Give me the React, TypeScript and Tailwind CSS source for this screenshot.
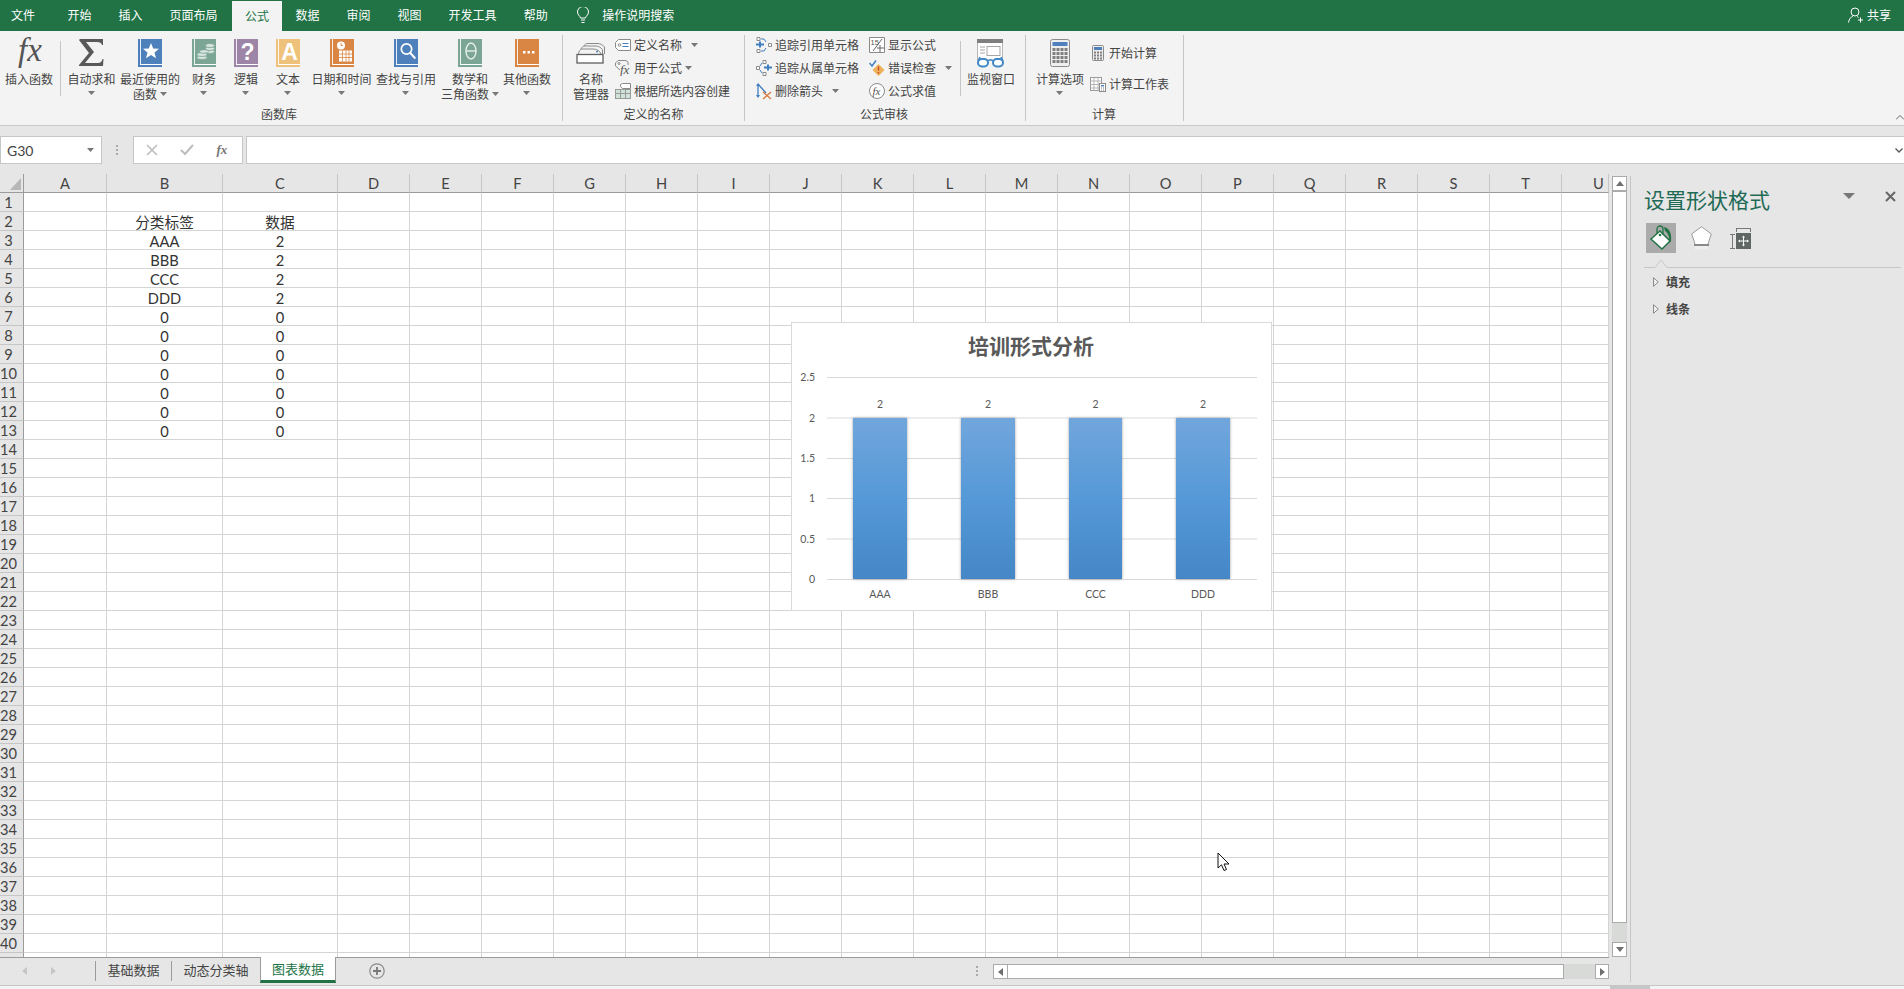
import React from 'react';

const cjk = "font-['Noto_Sans_CJK_SC',sans-serif]";

const Caret = ({ className = '' }: { className?: string }) => (
  <svg width="7" height="4" viewBox="0 0 7 4" className={className}>
    <path d="M0 0h7L3.5 4z" fill="#777" />
  </svg>
);

// book icons in the function library
const Book = ({ color, children }: { color: string; children?: React.ReactNode }) => (
  <svg width="24" height="28" viewBox="0 0 24 28">
    <rect width="24" height="28" fill={color} />
    <rect x="2" y="0" width="1" height="25" fill="#fff" opacity="0.85" />
    <rect x="2" y="25" width="22" height="1" fill="#fff" />
    {children}
  </svg>
);

const icons = {
  fx: (
    <svg width="36" height="40" viewBox="0 -6 36 40" className="-mb-[12px] -mt-[6px]">
      <text x="7" y="22" fontFamily="Liberation Serif" fontStyle="italic" fontSize="33" fill="#555">fx</text>
    </svg>
  ),
  sigma: (
    <svg width="25" height="28" viewBox="0 0 25 28">
      <path d="M1 0H24V6H23C22.5 4 21 3 18 3H7L15 13L6 24H19C22 24 23 22 23.5 20H24.5L24 27H0V26L10 14L0 1Z" fill="#595959" />
    </svg>
  ),
  recent: (
    <Book color="#4e81bb">
      <path d="M13 4l2.2 5.4 5.8.4-4.5 3.7 1.5 5.7L13 16l-5 3.2 1.5-5.7L5 9.800l5.800-.4z" fill="#fff" />
    </Book>
  ),
  finance: (
    <Book color="#7ba595">
      <g fill="#d8e4df" stroke="#7ba595" strokeWidth="0.8">
        <ellipse cx="18" cy="12.500" rx="4.500" ry="2" />
        <ellipse cx="18" cy="9.500" rx="4.500" ry="2" />
        <ellipse cx="18" cy="6.500" rx="4.500" ry="2" />
        <ellipse cx="10" cy="18.500" rx="5" ry="2" />
        <ellipse cx="10" cy="15.500" rx="5" ry="2" />
        <ellipse cx="12" cy="12.500" rx="4.500" ry="1.800" />
      </g>
    </Book>
  ),
  logic: (
    <Book color="#9c85a6">
      <text x="13.500" y="21" textAnchor="middle" fontFamily="Liberation Sans" fontWeight="700" fontSize="23" fill="#fff">?</text>
    </Book>
  ),
  text: (
    <Book color="#efc27b">
      <text x="13.500" y="21" textAnchor="middle" fontFamily="Liberation Sans" fontWeight="700" fontSize="23" fill="#fff">A</text>
    </Book>
  ),
  date: (
    <Book color="#d98644">
      <circle cx="11" cy="6.500" r="4" fill="#fff" />
      <path d="M11 4v2.500h2" stroke="#d98644" strokeWidth="0.900" fill="none" />
      <path d="M9 11.500h13v11H9z" fill="#fff" />
      <path d="M9 15h13M9 18.500h13M12.500 11.500v11M16 11.500v11M19 11.500v11" stroke="#d98644" strokeWidth="0.800" />
    </Book>
  ),
  lookup: (
    <Book color="#4e81bb">
      <circle cx="12.500" cy="10" r="5.200" fill="none" stroke="#fff" strokeWidth="1.700" />
      <path d="M16.300 14l5 5.500" stroke="#fff" strokeWidth="2" />
    </Book>
  ),
  math: (
    <Book color="#7ba595">
      <ellipse cx="13" cy="12" rx="5" ry="8" fill="none" stroke="#e6efeb" strokeWidth="1.400" />
      <path d="M8 12h10" stroke="#e6efeb" strokeWidth="1.400" />
    </Book>
  ),
  other: (
    <Book color="#d98644">
      <path d="M8 12h2.500v2.500H8zM12.500 12H15v2.500h-2.500zM17 12h2.500v2.500H17z" fill="#fff" />
    </Book>
  ),
  names: (
    <svg width="30" height="21" viewBox="0 0 30 21">
      <g fill="none" stroke="#8a8a8a" strokeWidth="1">
        <path d="M8 3C9 1 10 .500 12 .500H22C24 .500 27 2 28.500 4V11" />
        <path d="M5 6C6 4 7 3 9 3H20C22 3 25 4.500 26.500 6.500V11" />
        <path d="M2.500 11C3 8 4 6 6 6H17C20 6 24 7.500 25 11" fill="#f3f3f3" />
      </g>
      <rect x="1" y="11.500" width="26" height="8.500" fill="#fff" stroke="#5f5f5f" strokeWidth="1.300" />
      <circle cx="21" cy="8.500" r="1" fill="#4e81bb" />
    </svg>
  ),
  watch: (
    <svg width="30" height="29" viewBox="0 0 30 29">
      <rect x="1.500" y="0" width="25" height="21" fill="#fff" stroke="#b5b5b5" />
      <rect x="1" y="0" width="26" height="4" fill="#7f7f7f" />
      <path d="M4 8h5M4 11h5M4 14h5" stroke="#a5a5a5" strokeWidth="1" />
      <rect x="11" y="7.500" width="13" height="9" fill="#fff" stroke="#a5a5a5" />
      <g fill="#fff" stroke="#3f87c6" strokeWidth="2">
        <rect x="2" y="20" width="10" height="7.500" rx="3.700" />
        <rect x="17" y="20" width="10" height="7.500" rx="3.700" />
      </g>
      <path d="M12 22c1.500-1.500 3.500-1.500 5 0M2 22l2-4M27 22l-2-4" fill="none" stroke="#3f87c6" strokeWidth="1.600" />
    </svg>
  ),
};

const Keys = ({ x, y, cols, rows, w, h, gap }: { x: number; y: number; cols: number; rows: number; w: number; h: number; gap: number }) => (
  <g fill="#7f7f7f">
    {Array.from({ length: rows * cols }).map((_, i) => (
      <rect key={i} x={x + (i % cols) * (w + gap)} y={y + Math.floor(i / cols) * (h + gap)} width={w} height={h} />
    ))}
  </g>
);

const Calculator = () => (
  <svg width="20" height="28" viewBox="0 0 20 28">
    <rect x="0.500" y="0.500" width="19" height="27" rx="2" fill="#eee" stroke="#8a8a8a" />
    <rect x="2.500" y="3" width="15" height="4" fill="#4e81bb" />
    <Keys x={2.500} y={9} cols={4} rows={4} w={3} h={3} gap={1} />
  </svg>
);

const SmallCalculator = () => (
  <svg width="12" height="16" viewBox="0 0 12 16">
    <rect x="0.500" y="0.500" width="11" height="15" rx="1" fill="#eee" stroke="#8a8a8a" />
    <rect x="2" y="2" width="8" height="3" fill="#4e81bb" />
    <Keys x={2} y={6.500} cols={3} rows={3} w={2} h={2} gap={1} />
  </svg>
);

const smallIcons = {
  define: (
    <svg width="16" height="12" viewBox="0 0 16 12">
      <path d="M3.500.5H15.500V11.500H3.500L.5 8.500V3.500z" fill="#fff" stroke="#8a8a8a" />
      <circle cx="4.500" cy="6" r="1.300" fill="none" stroke="#8a8a8a" />
      <path d="M7.500 4.500h6M7.500 7.500h6" stroke="#3f7fc0" strokeWidth="1.200" />
    </svg>
  ),
  useIn: (
    <svg width="16" height="16" viewBox="0 0 16 16">
      <path d="M3 .5H11L13 2v3M3 .5L.5 3v3L5 10" fill="none" stroke="#8a8a8a" />
      <circle cx="4" cy="3.500" r="1" fill="none" stroke="#8a8a8a" />
      <text x="5" y="14" fontFamily="Liberation Serif" fontStyle="italic" fontSize="13" fill="#555">fx</text>
    </svg>
  ),
  create: (
    <svg width="16" height="16" viewBox="0 0 16 16">
      <rect x="0.500" y="6.500" width="15" height="9" fill="#cfe3d8" stroke="#9a9a9a" />
      <path d="M5.500 6.500v9M10.500 6.500v9M.5 10.500h15" stroke="#9a9a9a" />
      <path d="M7.500 4H15.500V9H7.500L5.500 7V5z" fill="#fff" stroke="#8a8a8a" transform="translate(0 -3.500)" />
    </svg>
  ),
  precedents: (
    <svg width="16" height="16" viewBox="0 0 16 16">
      <path d="M1 .5h3v3H1zM1 12.500h3v3H1zM12.500 6.500h3v3h-3z" fill="#fff" stroke="#8a8a8a" />
      <path d="M0 6.500h3v-2h2v2h3v2H5v2H3v-2H0z" fill="#3f7fc0" />
      <path d="M5 2h3l2 3M5 14h3l2-3" fill="none" stroke="#3f7fc0" />
    </svg>
  ),
  dependents: (
    <svg width="16" height="16" viewBox="0 0 16 16">
      <path d="M.5 6.500h3v3h-3zM7 .5h3v3H7zM7 12.500h3v3H7z" fill="#fff" stroke="#8a8a8a" />
      <path d="M8 6.500h3v-2h2v2h3v2h-3v2h-2v-2H8z" fill="#3f7fc0" />
      <path d="M4 6l2-3M4 10l2 3" fill="none" stroke="#3f7fc0" />
    </svg>
  ),
  remove: (
    <svg width="16" height="18" viewBox="0 0 16 18">
      <path d="M2 2v13M2 2l8 9" fill="none" stroke="#3f7fc0" strokeWidth="1.300" />
      <path d="M0 4l2-3 2 3zM0 13l2 3 2-3z" fill="#3f7fc0" />
      <path d="M7 10l8 7M15 10l-8 7" stroke="#d9783a" strokeWidth="1.300" />
    </svg>
  ),
  show: (
    <svg width="16" height="16" viewBox="0 0 16 16">
      <path d="M.5.5H15.500V15.500H.5z" fill="#fff" stroke="#8a8a8a" />
      <text x="1.500" y="7.500" fontFamily="Liberation Sans" fontSize="7.500" fill="#555">15</text>
      <path d="M13 2L4 14M8 11h7M11 8v7" stroke="#666" strokeWidth="1" />
    </svg>
  ),
  error: (
    <svg width="16" height="16" viewBox="0 0 16 16">
      <path d="M9.500 4l6 6-6 6-6-6z" fill="#eeb15a" />
      <path d="M9.500 6.500v4M9.500 12v1.500" stroke="#c9472f" strokeWidth="1.400" />
      <path d="M.5 3l2.500 3L7 .5" fill="none" stroke="#3f7fc0" strokeWidth="1.500" />
    </svg>
  ),
  evaluate: (
    <svg width="16" height="16" viewBox="0 0 16 16">
      <circle cx="8" cy="8" r="7.500" fill="#fff" stroke="#8a8a8a" />
      <text x="3.500" y="11.500" fontFamily="Liberation Serif" fontStyle="italic" fontSize="11" fill="#555">fx</text>
    </svg>
  ),
  sheet: (
    <svg width="16" height="15" viewBox="0 0 16 15">
      <rect x="0.500" y="0.500" width="11" height="13" fill="#fff" stroke="#9a9a9a" />
      <path d="M.5 4h11M.5 7.500h11M.5 11h11M4 .5v13M8 .5v13" stroke="#b5b5b5" />
      <rect x="9.500" y="6.500" width="6" height="8" fill="#fff" stroke="#8a8a8a" />
      <rect x="11" y="8" width="3" height="1.500" fill="#4e81bb" />
      <path d="M11 11h1M13 11h1M11 13h1M13 13h1" stroke="#7f7f7f" />
    </svg>
  ),
};

interface BigButtonProps {
  width: string;
  icon: React.ReactNode;
  lines: string[];
  caret?: 'own' | 'inline';
}

const BigButton = ({ width, icon, lines, caret }: BigButtonProps) => (
  <div className={`flex shrink-0 flex-col items-center pt-1 ${width}`}>
    <div className="flex h-[28px] items-start justify-center">{icon}</div>
    <div className="mt-1 flex flex-col items-center leading-[15px] whitespace-nowrap">
      {lines.map((line, i) => (
        <div key={i} className="flex items-center">
          {line}
          {caret === 'inline' && i === lines.length - 1 && <Caret className="ml-[3px]" />}
        </div>
      ))}
      {caret === 'own' && <Caret className="mt-[5px]" />}
    </div>
  </div>
);

const SmallRow = ({ icon, label, caret, iconBox = 'w-[16px]' }: { icon: React.ReactNode; label: string; caret?: string; iconBox?: string }) => (
  <div className="flex h-[20px] items-center whitespace-nowrap">
    <div className={`flex shrink-0 items-center justify-center ${iconBox}`}>{icon}</div>
    <span className="ml-[3px]">{label}</span>
    {caret && <Caret className={caret} />}
  </div>
);

const Group = ({ width, label, labelClass = '', children }: { width: string; label: string; labelClass?: string; children: React.ReactNode }) => (
  <div className={`flex h-[86px] shrink-0 flex-col border-r border-[#c6c6c6] ${width}`}>
    <div className="flex h-[71px]">{children}</div>
    <div className={`pt-[2px] text-center leading-[15px] ${labelClass}`}>{label}</div>
  </div>
);

const menuTabs = ['开始', '插入', '页面布局'];
const menuTabsAfter = ['数据', '审阅', '视图', '开发工具', '帮助'];

const TitleBar = () => (
  <div className="flex h-[31px] shrink-0 items-center bg-[#217346] pb-px text-[12px] text-white">
    <div className="pl-[11px] pr-[19px]">文件</div>
    {menuTabs.map((t) => (
      <div key={t} className="px-[13.5px]">{t}</div>
    ))}
    <div className="-mb-px ml-px mt-px flex h-[30px] w-[50px] items-center justify-center bg-[#f3f3f3] pb-px text-[#217346]">公式</div>
    {menuTabsAfter.map((t) => (
      <div key={t} className="px-[13.5px]">{t}</div>
    ))}
    <svg width="12" height="17" viewBox="0 0 12 17" className="ml-[16px]">
      <path d="M3.500 11C3 8.500.5 8 .5 5a5.500 5.500 0 0 1 11 0c0 3-2.500 3.500-3 6z" fill="none" stroke="#fff" />
      <path d="M4 13h4M4.500 15.500h3" stroke="#fff" />
    </svg>
    <div className="ml-[13px]">操作说明搜索</div>
    <div className="ml-auto flex items-center pr-[13px]">
      <svg width="15" height="16" viewBox="0 0 15 16">
        <circle cx="7" cy="5" r="4" fill="none" stroke="#fff" />
        <path d="M.5 15.500C1 12 3 10 5 9M9 9.500l1.500 1M10 13h5M12.500 10.500v5" fill="none" stroke="#fff" />
      </svg>
      <span className="ml-[4px]">共享</span>
    </div>
  </div>
);

const Ribbon = () => (
  <div className="relative flex h-[95px] shrink-0 border-b border-[#c9c9c9] bg-[#f3f3f3] pt-[4px] text-[12px] text-[#444]">
    <Group width="w-[563px]" label="函数库" labelClass="pr-[4px]">
      <BigButton width="w-[58px]" icon={icons.fx} lines={['插入函数']} />
      <div className="ml-[2px] mt-[6px] h-[55px] w-px bg-[#c6c6c6]" />
      <BigButton width="w-[61px]" icon={icons.sigma} lines={['自动求和']} caret="own" />
      <BigButton width="w-[56px]" icon={icons.recent} lines={['最近使用的', '函数']} caret="inline" />
      <BigButton width="w-[52px]" icon={icons.finance} lines={['财务']} caret="own" />
      <BigButton width="w-[32px]" icon={icons.logic} lines={['逻辑']} caret="own" />
      <BigButton width="w-[52px]" icon={icons.text} lines={['文本']} caret="own" />
      <BigButton width="w-[55px]" icon={icons.date} lines={['日期和时间']} caret="own" />
      <BigButton width="w-[74px]" icon={icons.lookup} lines={['查找与引用']} caret="own" />
      <BigButton width="w-[54px]" icon={icons.math} lines={['数学和', '三角函数']} caret="inline" />
      <BigButton width="w-[60px]" icon={icons.other} lines={['其他函数']} caret="own" />
    </Group>
    <Group width="w-[182px]" label="定义的名称">
      <div className="ml-[4px] w-[48px]">
        <BigButton width="w-[48px]" icon={<div className="pt-[4px]">{icons.names}</div>} lines={['名称', '管理器']} />
      </div>
      <div className="flex flex-col gap-[3px]">
        <SmallRow icon={smallIcons.define} label="定义名称" caret="ml-[9px]" />
        <SmallRow icon={smallIcons.useIn} label="用于公式" caret="ml-[3px]" />
        <SmallRow icon={smallIcons.create} label="根据所选内容创建" />
      </div>
    </Group>
    <Group width="w-[281px]" label="公式审核" labelClass="pr-[2px]">
      <div className="ml-[11px] flex w-[113px] shrink-0 flex-col gap-[3px]">
        <SmallRow icon={smallIcons.precedents} label="追踪引用单元格" />
        <SmallRow icon={smallIcons.dependents} label="追踪从属单元格" />
        <SmallRow icon={smallIcons.remove} label="删除箭头" caret="ml-[9px]" />
      </div>
      <div className="flex w-[91px] shrink-0 flex-col gap-[3px]">
        <SmallRow icon={smallIcons.show} label="显示公式" />
        <SmallRow icon={smallIcons.error} label="错误检查" caret="ml-[9px]" />
        <SmallRow icon={smallIcons.evaluate} label="公式求值" />
      </div>
      <div className="mt-[6px] h-[55px] w-px shrink-0 bg-[#c6c6c6]" />
      <BigButton width="w-[60px]" icon={icons.watch} lines={['监视窗口']} />
    </Group>
    <Group width="w-[158px]" label="计算" labelClass="pr-[1px]">
      <BigButton width="w-[60px] ml-[4px]" icon={<Calculator />} lines={['计算选项']} caret="own" />
      <div className="flex flex-col gap-[11px] pt-[8px]">
        <SmallRow icon={<SmallCalculator />} label="开始计算" />
        <SmallRow icon={smallIcons.sheet} label="计算工作表" />
      </div>
    </Group>
    <svg width="8" height="5" viewBox="0 0 8 5" className="absolute right-[0px] bottom-[5px]">
      <path d="M0 4.500L4 .5l4 4" fill="none" stroke="#666" />
    </svg>
  </div>
);

const FormulaBar = () => (
  <div className="mt-[10px] flex h-[28px] shrink-0 items-stretch">
    <div className="flex w-[102px] items-center justify-between border border-[#c6c6c6] bg-white pl-[6px] pr-[7px] font-['Lato','Noto_Sans_CJK_SC',sans-serif] text-[14px] text-[#444]">
      G30
      <Caret />
    </div>
    <div className="flex w-[30.500px] flex-col items-center justify-center gap-[2px]">
      <span className="h-[2px] w-[2px] bg-[#aaa]" />
      <span className="h-[2px] w-[2px] bg-[#aaa]" />
      <span className="h-[2px] w-[2px] bg-[#aaa]" />
    </div>
    <div className="flex w-[110px] items-center border border-[#c6c6c6] bg-white">
      <svg width="12" height="12" viewBox="0 0 12 12" className="ml-[12px]">
        <path d="M1 1l10 10M11 1L1 11" stroke="#bdbdbd" strokeWidth="1.600" />
      </svg>
      <svg width="14" height="12" viewBox="0 0 14 12" className="ml-[22px]">
        <path d="M1 6l4 4 8-9" fill="none" stroke="#bdbdbd" strokeWidth="2" />
      </svg>
      <span className="ml-[23px] font-['Liberation_Serif',serif] text-[13px] font-bold italic text-[#777]">fx</span>
    </div>
    <div className="ml-[3px] flex flex-1 items-center justify-end border-y border-l border-[#c6c6c6] bg-white pr-[1px]">
      <svg width="8" height="5" viewBox="0 0 8 5">
        <path d="M.5.5L4 4 7.500.5" fill="none" stroke="#555" strokeWidth="1.300" />
      </svg>
    </div>
  </div>
);

const columns = 'ABCDEFGHIJKLMNOPQRSTU'.split('');
const rows = Array.from({ length: 41 }, (_, i) => i + 1);

const cellData: Record<number, [string, string]> = {
  2: ['分类标签', '数据'],
  3: ['AAA', '2'],
  4: ['BBB', '2'],
  5: ['CCC', '2'],
  6: ['DDD', '2'],
  7: ['0', '0'],
  8: ['0', '0'],
  9: ['0', '0'],
  10: ['0', '0'],
  11: ['0', '0'],
  12: ['0', '0'],
  13: ['0', '0'],
};

const Sheet = () => (
  <div className="grid grid-cols-[24px_83px_116px_115px_repeat(17,72px)_47px] font-['Lato','Noto_Sans_CJK_SC',sans-serif] text-[14.670px] text-[#333]">
    <div className="relative h-[19px] border-b border-r border-[#9b9b9b]">
      <svg width="11" height="12" viewBox="0 0 11 12" className="absolute left-[10px] top-[4px]">
        <path d="M11 0v12H0z" fill="#b7b7b7" />
      </svg>
    </div>
    {columns.map((c) => (
      <div
        key={c}
        className={`flex h-[19px] items-center border-b border-r border-b-[#9b9b9b] border-r-[#c6c6c6] pt-[1px] text-[#444] ${c === 'U' ? 'justify-start pl-[31px]' : 'justify-center'}`}
      >
        {c}
      </div>
    ))}
    {rows.map((r) => (
      <React.Fragment key={r}>
        <div className="flex h-[19px] items-center justify-center border-b border-r border-b-[#c6c6c6] border-r-[#9b9b9b] pr-[6px] pt-[2px] text-[#444]">
          {r <= 40 ? r : ''}
        </div>
        {columns.map((c) => (
          <div key={c} className="flex h-[19px] items-center justify-center border-b border-r border-[#d4d4d4] bg-white pt-[2px] leading-[17px]">
            {c === 'B' && cellData[r]?.[0]}
            {c === 'C' && cellData[r]?.[1]}
          </div>
        ))}
      </React.Fragment>
    ))}
  </div>
);

const yTicks: [string, number][] = [
  ['2.5', 377],
  ['2', 417.500],
  ['1.5', 458],
  ['1', 498],
  ['0.5', 538.500],
  ['0', 579],
];

const bars: [string, number, number][] = [
  ['AAA', 853, 54],
  ['BBB', 961, 54],
  ['CCC', 1069, 53],
  ['DDD', 1176, 54],
];

const Chart = () => (
  <div className="absolute left-[791px] top-[148px] h-[289px] w-[481px] border border-[#d9d9d9] bg-white">
    <div className="mt-[7px] pr-[1px] text-center text-[21px] font-bold leading-[30px] text-[#595959]">培训形式分析</div>
    <svg width="481" height="289" viewBox="792 323 481 289" className="absolute left-0 top-0">
      <defs>
        <linearGradient id="barFill" x1="0" y1="0" x2="0" y2="1">
          <stop offset="0" stopColor="#71a6dc" />
          <stop offset="0.5" stopColor="#5599d8" />
          <stop offset="1" stopColor="#4587c6" />
        </linearGradient>
        <filter id="barShadow" x="-20%" y="-5%" width="140%" height="110%">
          <feDropShadow dx="0" dy="0" stdDeviation="1.500" floodColor="#777" floodOpacity="0.700" />
        </filter>
      </defs>
      <g fontFamily="Lato" fontSize="10.500" fill="#595959">
        {yTicks.map(([label, y]) => (
          <g key={label}>
            <line x1="827" x2="1257" y1={y + 0.5} y2={y + 0.5} stroke="#d9d9d9" />
            <text x="815" y={y + 4} textAnchor="end">{label}</text>
          </g>
        ))}
        {bars.map(([label, x, w]) => (
          <g key={label}>
            <rect x={x} y="418" width={w} height="161" fill="url(#barFill)" filter="url(#barShadow)" />
            <text x={x + w / 2} y="408" textAnchor="middle">2</text>
            <text x={x + w / 2} y="598" textAnchor="middle">{label}</text>
          </g>
        ))}
      </g>
    </svg>
  </div>
);

const ScrollButton = ({ children, className = '' }: { children: React.ReactNode; className?: string }) => (
  <div className={`flex shrink-0 items-center justify-center border border-[#ababab] bg-white ${className}`}>{children}</div>
);

const VScroll = () => (
  <div className="ml-[3px] mt-[2px] flex w-[15px] shrink-0 flex-col bg-[#d8dad8]">
    <ScrollButton className="h-[15px]">
      <svg width="8" height="5" viewBox="0 0 8 5"><path d="M4 0l4 5H0z" fill="#6f6f6f" /></svg>
    </ScrollButton>
    <div className="h-[732px] border border-[#ababab] bg-white" />
    <div className="flex-1" />
    <ScrollButton className="h-[15px]">
      <svg width="8" height="5" viewBox="0 0 8 5"><path d="M0 0h8L4 5z" fill="#6f6f6f" /></svg>
    </ScrollButton>
  </div>
);

const TabBar = () => (
  <div className="flex h-[28px] w-[1609px] shrink-0 items-start border-t border-[#9b9b9b] text-[13px] text-[#444]">
    <svg width="5" height="8" viewBox="0 0 5 8" className="ml-[22px] mt-[9px]"><path d="M5 0v8L0 4z" fill="#c6c6c6" /></svg>
    <svg width="5" height="8" viewBox="0 0 5 8" className="ml-[24px] mt-[9px]"><path d="M0 0v8l5-4z" fill="#c6c6c6" /></svg>
    <div className="ml-[39px] mt-[3px] h-[20px] w-px bg-[#9b9b9b]" />
    <div className="flex h-[23px] w-[75px] items-center justify-center">基础数据</div>
    <div className="mt-[3px] h-[20px] w-px bg-[#9b9b9b]" />
    <div className="flex h-[23px] w-[88px] items-center justify-center">动态分类轴</div>
    <div className="-mt-px flex h-[26px] w-[76px] items-center justify-center border-x border-b-[3px] border-x-[#9b9b9b] border-b-[#217346] bg-white text-[#217346]">图表数据</div>
    <svg width="16" height="16" viewBox="0 0 16 16" className="ml-[33px] mt-[5px]">
      <circle cx="8" cy="8" r="7.200" fill="none" stroke="#8a8a8a" strokeWidth="1.200" />
      <path d="M8 4v8M4 8h8" stroke="#777" strokeWidth="1.800" />
    </svg>
    <div className="ml-auto mt-[8px] flex flex-col gap-[2px]">
      <span className="h-[2px] w-[2px] bg-[#aaa]" />
      <span className="h-[2px] w-[2px] bg-[#aaa]" />
      <span className="h-[2px] w-[2px] bg-[#aaa]" />
    </div>
    <div className="ml-[15px] mt-[6px] flex h-[15px] w-[616px] bg-[#d8dad8]">
      <ScrollButton className="w-[15px]">
        <svg width="5" height="8" viewBox="0 0 5 8"><path d="M5 0v8L0 4z" fill="#6f6f6f" /></svg>
      </ScrollButton>
      <div className="w-[556px] border-y border-r border-[#ababab] bg-white" />
      <div className="flex-1" />
      <ScrollButton className="w-[14px]">
        <svg width="5" height="8" viewBox="0 0 5 8"><path d="M0 0v8l5-4z" fill="#6f6f6f" /></svg>
      </ScrollButton>
    </div>
  </div>
);

const PaneSection = ({ label, className = '' }: { label: string; className?: string }) => (
  <div className={`ml-[22px] flex h-[20px] items-center text-[12px] font-bold text-[#444] ${className}`}>
    <svg width="6" height="10" viewBox="0 0 6 10"><path d="M.5.7v8.600L5.300 5z" fill="#f0f0f0" stroke="#8a8a8a" /></svg>
    <span className="ml-[7px]">{label}</span>
  </div>
);

const FormatPane = () => (
  <div className="flex-1 pt-[11px]">
    <div className="flex items-start pl-[13px]">
      <div className="h-[28px] w-[126px] text-[21px] leading-[28px] text-[#1f6a55]">设置形状格式</div>
      <svg width="12" height="6" viewBox="0 0 12 6" className="ml-[73px] mt-[8px]"><path d="M0 0h12L6 6z" fill="#777" /></svg>
      <svg width="11" height="11" viewBox="0 0 11 11" className="ml-[30px] mt-[6px]">
        <path d="M1 1l9 9M10 1l-9 9" stroke="#666" strokeWidth="2" />
      </svg>
    </div>
    <div className="ml-[15px] mt-[10px] flex h-[30px] items-center">
      <div className="flex h-[30px] w-[30px] items-center justify-center bg-[#ababab]">
        <svg width="24" height="26" viewBox="0 0 24 26">
          <path d="M11 6l10 10-8 8L2 14z" fill="#fff" stroke="#217346" strokeWidth="1.500" />
          <path d="M8 8V4a2.500 2.500 0 0 1 6 0v6" fill="none" stroke="#217346" strokeWidth="1.300" />
          <circle cx="11" cy="10" r="1.300" fill="#217346" />
          <path d="M15 2c5 1 8 6 7 14l-2 2c1-6-1-10-4-12z" fill="#217346" />
        </svg>
      </div>
      <svg width="21" height="24" viewBox="0 0 21 24" className="ml-[15px]">
        <path d="M10.500 .7L20.300 8l-3.800 11.500h-12L.7 8z" fill="#fff" stroke="#9a9a9a" />
        <rect x="3" y="18" width="15" height="2" fill="#8a8a8a" />
        <path d="M4.500 20l-1 3.500h14l-1-3.500z" fill="#eee" />
      </svg>
      <svg width="21" height="21" viewBox="0 0 21 21" className="ml-[18px]">
        <path d="M6.500.5h14M6.500 0v4M20.500 0v4M0 6.500h5M0 20.500h5M2.500 6.500v14" stroke="#777" fill="none" />
        <rect x="6" y="5" width="15" height="16" fill="#5f6664" />
        <path d="M13.500 9v8M9.500 13h8" stroke="#fff" />
        <path d="M12 9.500l1.500-2 1.500 2zM12 16.500l1.500 2 1.500-2zM10 11.500l-2 1.500 2 1.500zM17 11.500l2 1.500-2 1.500z" fill="#fff" />
      </svg>
    </div>
    <svg width="257" height="9" viewBox="0 0 257 9" className="ml-[13px] mt-[6px]">
      <path d="M0 8.500H11L17 1l6 7.500H257" fill="none" stroke="#c6c6c6" />
    </svg>
    <div className="mt-[4px]"><PaneSection label="填充" /></div>
    <PaneSection label="线条" className="mt-[7px]" />
  </div>
);

const App = () => (
  <div className={`relative flex h-[989px] w-[1904px] flex-col overflow-hidden bg-[#e6e6e6] ${cjk}`}>
    <TitleBar />
    <Ribbon />
    <FormulaBar />
    <div className="mt-[10px] flex h-[811px] shrink-0">
      <div className="flex w-[1630px] shrink-0 flex-col">
        <div className="flex h-[783px] shrink-0">
          <div className="relative h-[783px] w-[1609px] shrink-0 overflow-hidden">
            <Sheet />
            <Chart />
          </div>
          <VScroll />
        </div>
        <TabBar />
      </div>
      <div className="mb-[3px] mt-[2px] w-px shrink-0 bg-[#c6c6c6]" />
      <FormatPane />
    </div>
    <div className="flex flex-1 border-t border-[#c6c6c6] bg-[#f3f3f3]">
      <div className="ml-[1610px] w-[40px] bg-[#c6c6c6]" />
    </div>
    {/* mouse pointer */}
    <svg width="14" height="20" viewBox="0 0 14 20" className="absolute left-[1217px] top-[852px]">
      <path d="M1 1v15l3.500-3.200L7 18.500l2.500-1-2.500-5.500h5z" fill="#fff" stroke="#111" />
    </svg>
  </div>
);

export default App;
